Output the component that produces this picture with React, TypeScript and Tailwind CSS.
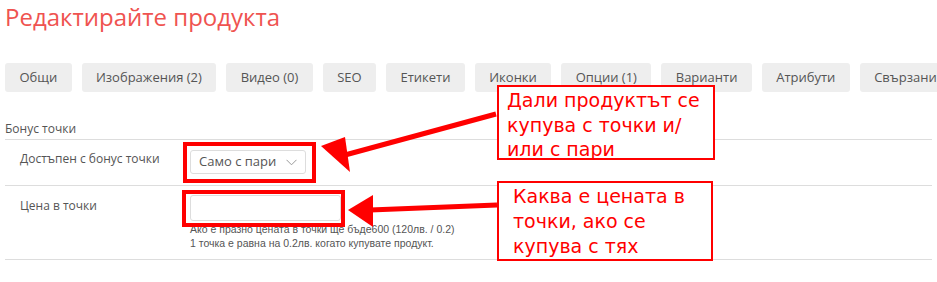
const tabs = [
  'Общи',
  'Изображения (2)',
  'Видео (0)',
  'SEO',
  'Етикети',
  'Иконки',
  'Опции (1)',
  'Варианти',
  'Атрибути',
  'Свързани продукти',
];

export default function App() {
  return (
    <div className="relative w-[937px] h-[282px] overflow-hidden bg-white font-['Open_Sans',sans-serif] text-[#555]">
      <h1 className="pl-[5px] pt-[1px] h-[63px] text-[24px] leading-[32px] text-[#ef5350]">
        Редактирайте продукта
      </h1>

      <div className="flex gap-[10px] pl-[5px] whitespace-nowrap">
        {tabs.map((t) => (
          <div
            key={t}
            className="shrink-0 h-[29px] px-[14.4px] flex items-center rounded-[3px] bg-[#eeeeee] text-[13px] text-[#555]"
          >
            {t}
          </div>
        ))}
      </div>

      <div className="px-[5px] pt-[25px]">
        <div className="h-[23px] text-[12px] leading-[23px] border-b border-[#dddddd]">Бонус точки</div>

        <div className="flex h-[46px] border-b border-[#dddddd]">
          <div className="w-[185px] pl-[15px] pt-[10px] text-[12px]">Достъпен с бонус точки</div>
          <div className="pt-[10px]">
            <div className="w-[116px] h-[24px] flex items-center justify-between pl-[8px] pr-[8px] border border-[#dddddd] rounded-[3px] text-[13px]">
              <span>Само с пари</span>
              <svg width="11" height="7" viewBox="0 0 11 7" fill="none" stroke="#999" strokeWidth="1">
                <path d="M0.5 0.8 L5.5 5.8 L10.5 0.8" />
              </svg>
            </div>
          </div>
        </div>

        <div className="flex h-[74px] border-b border-[#dddddd]">
          <div className="w-[185px] pl-[15px] pt-[11px] text-[12px]">Цена в точки</div>
          <div className="pt-[9px]">
            <div className="w-[151px] h-[26px] border border-[#dddddd] rounded-[3px]" />
            <div className="mt-[1px] font-['Liberation_Sans',Arial,sans-serif] text-[10.5px] leading-[14px] text-[#555]">
              <div>Ако е празно цената в точки ще бъде600 (120лв. / 0.2)</div>
              <div>1 точка е равна на 0.2лв. когато купувате продукт.</div>
            </div>
          </div>
        </div>
      </div>

      {/* annotations */}
      <div className="absolute left-[183px] top-[142px] w-[133px] h-[41px] border-[4px] border-[#ff0000]" />
      <div className="absolute left-[182px] top-[190px] w-[163px] h-[37px] border-[4px] border-[#ff0000]" />

      <svg className="absolute left-0 top-0" width="937" height="282">
        <line x1="496" y1="114" x2="345" y2="155" stroke="#ff0000" strokeWidth="5" />
        <polygon points="321,146 345,137 350,172" fill="#ff0000" />
        <line x1="497" y1="205" x2="370" y2="210" stroke="#ff0000" strokeWidth="5" />
        <polygon points="348,210 373,195 373,227" fill="#ff0000" />
      </svg>

      <div className="absolute left-[497px] top-[85px] w-[218px] h-[75px] border-2 border-[#ff0000] bg-white pl-[8px] pt-[1px] font-['DejaVu_Sans',sans-serif] text-[19px] leading-[24.5px] text-[#ff0000] whitespace-nowrap">
        Дали продуктът се
        <br />
        купува с точки и/
        <br />
        или с пари
      </div>
      <div className="absolute left-[497px] top-[181px] w-[216px] h-[80px] border-2 border-[#ff0000] bg-white pl-[14px] pt-[1px] font-['DejaVu_Sans',sans-serif] text-[19px] leading-[25px] text-[#ff0000] whitespace-nowrap">
        Каква е цената в
        <br />
        точки, ако се
        <br />
        купува с тях
      </div>
    </div>
  );
}
